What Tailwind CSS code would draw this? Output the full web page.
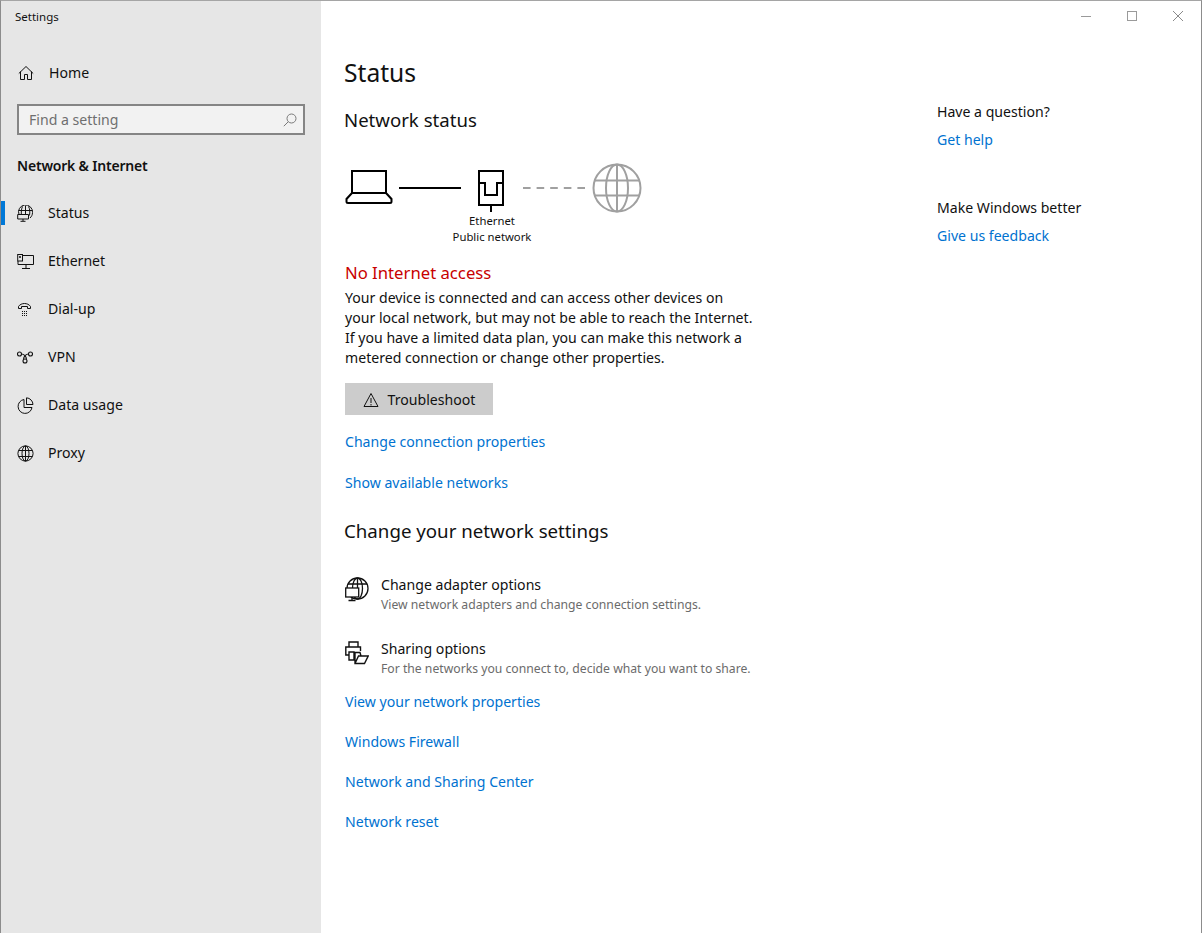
<!DOCTYPE html>
<html lang="en">
<head>
  <meta charset="UTF-8" />
  <title>Settings</title>
  <script src="https://cdn.jsdelivr.net/npm/@tailwindcss/browser@4"></script>
</head>
<body class="m-0 bg-white">
  <div class="flex h-[933px] w-[1202px] overflow-hidden border-t border-l border-r border-t-[#a5a5a5] border-l-[#8c8c8c] border-r-[#8c8c8c] font-['Noto_Sans','Open_Sans',sans-serif] text-[14.1px] text-[#111]">
    <!-- Sidebar -->
    <aside class="w-[320px] shrink-0 bg-[#e6e6e6]">
      <div class="h-[32px] pl-[14px] pt-[7px] text-[11.5px] leading-[18px]">Settings</div>
      <div class="mt-[24px] flex h-[32px] items-center">
        <svg class="ml-[17px] mr-[15px]" width="16" height="16" viewBox="0 0 16 16" fill="none" stroke="#111" stroke-width="1"><path d="M.8 8.500 8 1.500 15.200 8.500M2.500 6.500V14.500H6.500V9.500H9.500V14.500H13.500V6.500"/></svg>
        <span>Home</span>
      </div>
      <div class="ml-[16px] mt-[15px] flex h-[31px] w-[288px] items-center justify-between border-2 border-[#858585] bg-[#f2f2f2] pl-[10px] pr-[6px] text-[#6f6f6f]">
        <span>Find a setting</span>
        <svg width="14" height="14" viewBox="0 0 14 14" fill="none" stroke="#7a7a7a" stroke-width="1"><circle cx="8.500" cy="5.500" r="4.500"/><path d="M5.200 8.800 .8 13.200"/></svg>
      </div>
      <div class="ml-[16px] mt-[19px] h-[24px] text-[14px] font-semibold leading-[24px] tracking-[-0.2px]">Network &amp; Internet</div>
      <nav class="mt-[11px]">
        <div class="flex h-[48px] items-center">
          <span class="h-[24px] w-[4px] bg-[#0078d7]"></span>
          <svg class="ml-[12px] mr-[14px]" width="17" height="17" viewBox="0 0 17 17" fill="none" stroke="#111" stroke-width="1"><path d="M2 9.500A7 7 0 1 1 15.500 7.500C15.500 10 14.500 11.500 13 13M1.500 5.500H15.500M8.500 .8V10M5.500 1.500C4.500 3.500 4.200 6 4.300 9.500M11.500 1.500C13 4 13 7 12.500 10.500M.7 9.500H11.500V14H.7ZM6 14V16M3.500 16.300H8.500"/></svg>
          <span>Status</span>
        </div>
        <div class="flex h-[48px] items-center">
          <svg class="ml-[16px] mr-[14px]" width="17" height="17" viewBox="0 0 17 17" fill="none" stroke="#111" stroke-width="1"><path d="M5.500 2.500H16.500V11.500H1V8M9 11.500V15M5 15.500H13"/><rect x=".7" y="1.500" width="4.800" height="6.500"/><path d="M2 4H4" stroke-width="1.500"/></svg>
          <span>Ethernet</span>
        </div>
        <div class="flex h-[48px] items-center">
          <svg class="ml-[16px] mr-[14px]" width="17" height="17" viewBox="0 0 17 17" fill="none" stroke="#111" stroke-width="1"><path d="M1.500 7.500V5.500C4 1.500 11 1.500 13.500 5.500V7.500H10.500V5.500H4.500V7.500Z"/><path d="M5 10.500H6M7 10.500H8M9 10.500H10M5 12.500H6M7 12.500H8M9 12.500H10M5 14.500H6M7 14.500H8M9 14.500H10"/></svg>
          <span>Dial-up</span>
        </div>
        <div class="flex h-[48px] items-center">
          <svg class="ml-[16px] mr-[15px]" width="16" height="16" viewBox="0 0 16 16" fill="none" stroke="#111" stroke-width="1.100"><circle cx="2.500" cy="5" r="2"/><circle cx="13.500" cy="5" r="2"/><circle cx="8" cy="12" r="2"/><path d="M4.500 5C7 5 9.500 7.500 9.500 10.500M11.500 5C9 5 6.500 7.500 6.500 10.500"/></svg>
          <span>VPN</span>
        </div>
        <div class="flex h-[48px] items-center">
          <svg class="ml-[16px] mr-[14px]" width="17" height="17" viewBox="0 0 17 17" fill="none" stroke="#111" stroke-width="1"><path d="M7 2.500A7 7 0 1 0 15 10.500H7ZM9.500 .8A7 7 0 0 1 16 7.500H9.500Z"/></svg>
          <span>Data usage</span>
        </div>
        <div class="flex h-[48px] items-center">
          <svg class="ml-[16px] mr-[14px]" width="17" height="17" viewBox="0 0 17 17" fill="none" stroke="#111" stroke-width="1"><circle cx="8.500" cy="8.500" r="7.600"/><ellipse cx="8.500" cy="8.500" rx="3.500" ry="7.600"/><path d="M8.500 1V16M1.500 5.500H15.500M1.500 11.500H15.500"/></svg>
          <span>Proxy</span>
        </div>
      </nav>
    </aside>

    <!-- Main content -->
    <main class="relative flex flex-1">
      <div class="w-[616px] shrink-0 pl-[23px]">
        <h1 class="mt-[52px] h-[40px] text-[24.600px] leading-[40px]">Status</h1>
        <h2 class="mt-[11px] h-[32px] text-[18.600px] leading-[32px]">Network status</h2>
        <div class="mt-[34px] flex h-[43px] items-start">
          <svg class="ml-[1px]" width="48" height="36" viewBox="0 0 48 36" fill="none" stroke="#000" stroke-width="2"><path d="M7 1H41V23H7ZM7 23 1.500 29V31.500C1.500 32.200 2 33 3 33H45C46 33 46.500 32.200 46.500 31.500V29L41 23"/></svg>
          <svg class="ml-[6px] mt-[17px]" width="62" height="2"><rect width="62" height="2" fill="#000"/></svg>
          <svg class="ml-[17px]" width="26" height="42" viewBox="0 0 26 42" fill="none" stroke="#000" stroke-width="2"><path d="M1 1H25V35H1ZM1 13H7V25H19V13H25"/><path d="M13 36V42"/></svg>
          <svg class="ml-[19px] mt-[17px]" width="62" height="2"><path d="M0 1H62" stroke="#a0a0a0" stroke-width="2" stroke-dasharray="7.600 6"/></svg>
          <svg class="ml-[7px] -mt-[7px]" width="50" height="50" viewBox="0 0 50 50" fill="none" stroke="#a0a0a0" stroke-width="2"><circle cx="25" cy="25" r="23.500"/><ellipse cx="25" cy="25" rx="11" ry="23.500"/><path d="M25 2V48M3 17.500H47M3 32.500H47"/></svg>
        </div>
        <div class="ml-[48px] w-[200px] text-center text-[11.300px] leading-[16px]">
          <div>Ethernet</div>
          <div>Public network</div>
        </div>
        <div class="ml-[1px]">
          <div class="mt-[15px] h-[26px] text-[16.700px] leading-[26px] text-[#c80000]">No Internet access</div>
          <p class="mt-[2px] whitespace-nowrap leading-[20px]">Your device is connected and can access other devices on<br />your local network, but may not be able to reach the Internet.<br />If you have a limited data plan, you can make this network a<br />metered connection or change other properties.</p>
          <button class="mt-[15px] flex h-[32px] w-[148px] items-center justify-center gap-[9px] bg-[#cccccc] pt-[1px]">
            <svg width="16" height="16" viewBox="0 0 16 16" fill="none" stroke="#111" stroke-width="1"><path d="M8 1.500 15 14.500H1ZM8 6V11M8 12V13.500"/></svg>
            <span>Troubleshoot</span>
          </button>
          <a class="mt-[17px] block h-[20px] leading-[20px] text-[#0072d0]">Change connection properties</a>
          <a class="mt-[21px] block h-[20px] leading-[20px] text-[#0072d0]">Show available networks</a>
        </div>
        <h2 class="mt-[22px] h-[32px] text-[18.700px] leading-[32px]">Change your network settings</h2>
        <div class="ml-[1px] mt-[28px] flex h-[40px]">
          <svg class="mt-[2px]" width="24" height="26" viewBox="0 0 24 26" fill="none" stroke="#111" stroke-width="1.300"><circle cx="12.500" cy="11.500" r="10.500"/><ellipse cx="12.500" cy="11.500" rx="5" ry="10.500"/><path d="M12.500 1V13M3 7H22"/><rect x=".7" y="11" width="13" height="9" fill="#fff"/><path d="M7 20V23M3.500 23.500H10.500"/></svg>
          <div class="ml-[12px]">
            <div class="h-[20px] leading-[20px]">Change adapter options</div>
            <div class="h-[20px] text-[12.200px] leading-[20px] text-[#6b6b6b]">View network adapters and change connection settings.</div>
          </div>
        </div>
        <div class="ml-[1px] mt-[24px] flex h-[40px]">
          <svg class="mt-[2px]" width="24" height="24" viewBox="0 0 24 24" fill="none" stroke="#111" stroke-width="1.400"><path d="M4 6V1H13V6M4 14H.8V6H15.500V10M4 11H9V19H4ZM10 13V22.500H19.500L23.200 15H13.500L10 22.500M10 13V11.500H15L16 15"/></svg>
          <div class="ml-[12px]">
            <div class="h-[20px] leading-[20px]">Sharing options</div>
            <div class="h-[20px] text-[12.200px] leading-[20px] text-[#6b6b6b]">For the networks you connect to, decide what you want to share.</div>
          </div>
        </div>
        <div class="ml-[1px] mt-[13px] flex flex-col gap-[20px] text-[#0072d0]">
          <a class="h-[20px] leading-[20px]">View your network properties</a>
          <a class="h-[20px] leading-[20px]">Windows Firewall</a>
          <a class="h-[20px] leading-[20px]">Network and Sharing Center</a>
          <a class="h-[20px] leading-[20px]">Network reset</a>
        </div>
      </div>
      <div class="pt-[101px]">
        <div class="h-[20px] leading-[20px]">Have a question?</div>
        <a class="mt-[8px] block h-[20px] leading-[20px] text-[#0072d0]">Get help</a>
        <div class="mt-[48px] h-[20px] leading-[20px]">Make Windows better</div>
        <a class="mt-[8px] block h-[20px] leading-[20px] text-[#0072d0]">Give us feedback</a>
      </div>
      <!-- window buttons -->
      <div class="absolute right-[0px] top-[0px] flex h-[30px]">
        <div class="flex w-[46px] items-center justify-center"><svg width="12" height="12"><path d="M1 6.500H11" stroke="#9a9a9a"/></svg></div>
        <div class="flex w-[46px] items-center justify-center"><svg width="12" height="12"><rect x="1.500" y="1.500" width="9" height="9" fill="none" stroke="#9a9a9a"/></svg></div>
        <div class="flex w-[46px] items-center justify-center"><svg width="12" height="12"><path d="M1 1 11 11M11 1 1 11" stroke="#8a8a8a"/></svg></div>
      </div>
    </main>
  </div>
</body>
</html>
